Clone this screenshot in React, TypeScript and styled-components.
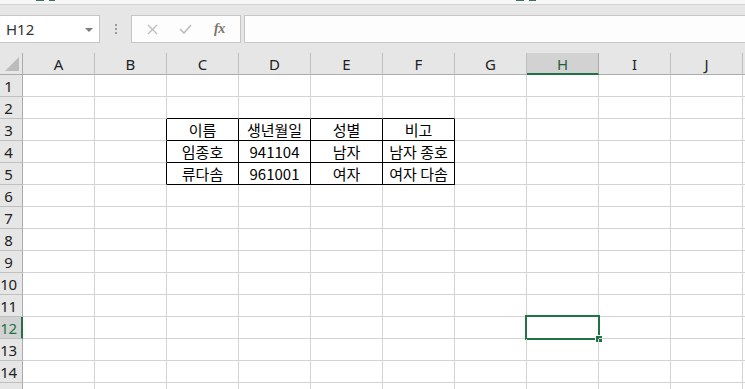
import styled, { createGlobalStyle } from "styled-components";

const GlobalStyle = createGlobalStyle`
  html, body {
    margin: 0;
    padding: 0;
    background: #ffffff;
    overflow: hidden;
  }
  body {
    font-family: "Noto Sans", "Noto Sans CJK KR", sans-serif;
  }
`;

const GREEN = "#217346";
const COLS = ["A", "B", "C", "D", "E", "F", "G", "H", "I", "J"];
const ROWS = Array.from({ length: 14 }, (_, i) => i + 1);

const data: Record<string, string> = {
    C3: "이름",
    D3: "생년월일",
    E3: "성별",
    F3: "비고",
    C4: "임종호",
    D4: "941104",
    E4: "남자",
    F4: "남자 종호",
    C5: "류다솜",
    D5: "961001",
    E5: "여자",
    F5: "여자 다솜",
};

const Window = styled.div`
    width: 745px;
    height: 389px;
    overflow: hidden;
    background: #ffffff;
`;

const TopStrip = styled.div`
    height: 4px;
    background: #f7f7f7;
    border-bottom: 1px solid #d4d4d4;
    position: relative;
`;

const RibbonMark = styled.span<{ $left: number; $width: number }>`
    position: absolute;
    top: 0;
    left: ${(p) => p.$left}px;
    width: ${(p) => p.$width}px;
    height: 1px;
    background: #3d6f68;
`;

const FormulaBar = styled.div`
    height: 48px;
    background: #e6e6e6;
    display: flex;
    align-items: flex-start;
    padding-top: 10px;
    box-sizing: border-box;
`;

const NameBox = styled.div`
    width: 100px;
    height: 28px;
    box-sizing: border-box;
    background: #ffffff;
    border: 1px solid #c6c6c6;
    border-left: none;
    display: flex;
    align-items: center;
    justify-content: space-between;
    padding: 0 6px 0 6px;
    font-family: "Noto Sans", sans-serif;
    font-size: 15px;
    color: #333;
`;

const DropArrow = styled.span`
    width: 0;
    height: 0;
    border-left: 4px solid transparent;
    border-right: 4px solid transparent;
    border-top: 4px solid #7a7a7a;
    margin-top: 1px;
`;

const Grip = styled.div`
    width: 31px;
    height: 28px;
    display: flex;
    flex-direction: column;
    align-items: center;
    justify-content: center;
    gap: 2px;
`;

const GripDot = styled.span`
    width: 2px;
    height: 2px;
    background: #9a9a9a;
`;

const ButtonGroup = styled.div`
    width: 110px;
    height: 28px;
    box-sizing: border-box;
    background: #fdfdfd;
    border: 1px solid #c6c6c6;
    display: flex;
    align-items: center;
    justify-content: space-around;
    padding: 0 4px;
`;

const IconSlot = styled.span`
    width: 20px;
    display: flex;
    align-items: center;
    justify-content: center;
`;

const Fx = styled.span`
    font-family: "Liberation Serif", serif;
    font-style: italic;
    font-weight: bold;
    font-size: 14px;
    color: #7d7468;
    letter-spacing: -0.5px;
`;

const FormulaInput = styled.div`
    flex: 1;
    height: 28px;
    box-sizing: border-box;
    margin-left: 3px;
    background: #fdfdfd;
    border: 1px solid #c6c6c6;
    border-right: none;
`;

const Row = styled.div`
    display: flex;
    height: 22px;
`;

const Corner = styled.div`
    width: 23px;
    height: 22px;
    box-sizing: border-box;
    background: #e6e6e6;
    border-right: 1px solid #ababab;
    border-bottom: 1px solid #ababab;
    position: relative;
`;

const CornerTriangle = styled.span`
    position: absolute;
    right: 3px;
    bottom: 3px;
    width: 0;
    height: 0;
    border-left: 14px solid transparent;
    border-bottom: 14px solid #bcbcbc;
`;

const ColHeader = styled.div<{ $active?: boolean }>`
    width: 72px;
    flex-shrink: 0;
    height: 22px;
    box-sizing: border-box;
    background: ${(p) => (p.$active ? "#d2d2d2" : "#e6e6e6")};
    border-right: 1px solid ${(p) => (p.$active ? "#ababab" : "#bfbfbf")};
    border-bottom: ${(p) => (p.$active ? `2px solid ${GREEN}` : "1px solid #ababab")};
    display: flex;
    align-items: center;
    justify-content: center;
    font-family: "Noto Sans", sans-serif;
    font-size: 15px;
    color: ${(p) => (p.$active ? "#1f5e3c" : "#222")};
    padding-top: ${(p) => (p.$active ? "1px" : "0")};
`;

const HeaderFill = styled.div`
    flex: 1;
    background: #e6e6e6;
    border-bottom: 1px solid #ababab;
`;

const RowHeader = styled.div<{ $active?: boolean }>`
    width: 23px;
    flex-shrink: 0;
    height: 22px;
    box-sizing: border-box;
    background: ${(p) => (p.$active ? "#d2d2d2" : "#e6e6e6")};
    border-right: ${(p) => (p.$active ? `2px solid ${GREEN}` : "1px solid #ababab")};
    border-bottom: 1px solid #bfbfbf;
    display: flex;
    align-items: center;
    justify-content: center;
    padding-right: ${(p) => (p.$active ? "4px" : "5px")};
    font-family: "Noto Sans", sans-serif;
    font-size: 15px;
    letter-spacing: -0.3px;
    white-space: nowrap;
    color: ${(p) => (p.$active ? GREEN : "#222")};
`;

const Cell = styled.div<{ $right?: boolean; $bottom?: boolean }>`
    width: 72px;
    flex-shrink: 0;
    height: 22px;
    box-sizing: border-box;
    border-right: 1px solid ${(p) => (p.$right ? "#000" : "#d4d4d4")};
    border-bottom: 1px solid ${(p) => (p.$bottom ? "#000" : "#d4d4d4")};
    display: flex;
    align-items: center;
    justify-content: center;
    font-family: "Noto Sans CJK KR", "Noto Sans", sans-serif;
    font-size: 15px;
    color: #000;
    white-space: nowrap;
    overflow: visible;
    position: relative;
`;

const CellFill = styled.div`
    flex: 1;
    height: 22px;
    box-sizing: border-box;
    border-bottom: 1px solid #d4d4d4;
`;

const Selection = styled.div`
    position: absolute;
    left: -2px;
    top: -2px;
    right: -2px;
    bottom: -2px;
    border: 2px solid ${GREEN};
    pointer-events: none;
`;

const Handle = styled.span`
    position: absolute;
    right: -4px;
    bottom: -4px;
    width: 6px;
    height: 6px;
    background: ${GREEN};
    border-left: 1px solid #fff;
    border-top: 1px solid #fff;
`;

const RowStub = styled.div`
    display: flex;
    height: 8px;
`;

const StubHeader = styled.div`
    width: 23px;
    flex-shrink: 0;
    box-sizing: border-box;
    background: #e6e6e6;
    border-right: 1px solid #ababab;
`;

const StubCell = styled.div`
    width: 72px;
    flex-shrink: 0;
    box-sizing: border-box;
    border-right: 1px solid #d4d4d4;
`;

const inTable = (col: number, row: number) => col >= 2 && col <= 5 && row >= 3 && row <= 5;

function App() {
    return (
        <Window>
            <GlobalStyle />
            <TopStrip>
                <RibbonMark $left={36} $width={8} />
                <RibbonMark $left={49} $width={6} />
                <RibbonMark $left={516} $width={8} />
                <RibbonMark $left={529} $width={7} />
            </TopStrip>
            <FormulaBar>
                <NameBox>
                    H12
                    <DropArrow />
                </NameBox>
                <Grip>
                    <GripDot />
                    <GripDot />
                    <GripDot />
                </Grip>
                <ButtonGroup>
                    <IconSlot>
                        <svg width="11" height="11" viewBox="0 0 11 11">
                            <path d="M1 1 L10 10 M10 1 L1 10" stroke="#bdbdbd" strokeWidth="1.3" fill="none" />
                        </svg>
                    </IconSlot>
                    <IconSlot>
                        <svg width="13" height="10" viewBox="0 0 13 10">
                            <path d="M1 5 L5 9 L12 1" stroke="#bdbdbd" strokeWidth="1.6" fill="none" />
                        </svg>
                    </IconSlot>
                    <IconSlot>
                        <Fx>fx</Fx>
                    </IconSlot>
                </ButtonGroup>
                <FormulaInput />
            </FormulaBar>
            <Row>
                <Corner>
                    <CornerTriangle />
                </Corner>
                {COLS.map((c) => (
                    <ColHeader key={c} $active={c === "H"}>
                        {c}
                    </ColHeader>
                ))}
                <HeaderFill />
            </Row>
            {ROWS.map((r) => (
                <Row key={r}>
                    <RowHeader $active={r === 12}>{r}</RowHeader>
                    {COLS.map((c, ci) => {
                        const right = inTable(ci, r) || inTable(ci + 1, r);
                        const bottom = inTable(ci, r) || inTable(ci, r + 1);
                        const key = `${c}${r}`;
                        return (
                            <Cell key={key} $right={right} $bottom={bottom}>
                                {data[key]}
                                {key === "H12" && (
                                    <Selection>
                                        <Handle />
                                    </Selection>
                                )}
                            </Cell>
                        );
                    })}
                    <CellFill />
                </Row>
            ))}
            <RowStub>
                <StubHeader />
                {COLS.map((c) => (
                    <StubCell key={c} />
                ))}
            </RowStub>
        </Window>
    );
}

export default App;
